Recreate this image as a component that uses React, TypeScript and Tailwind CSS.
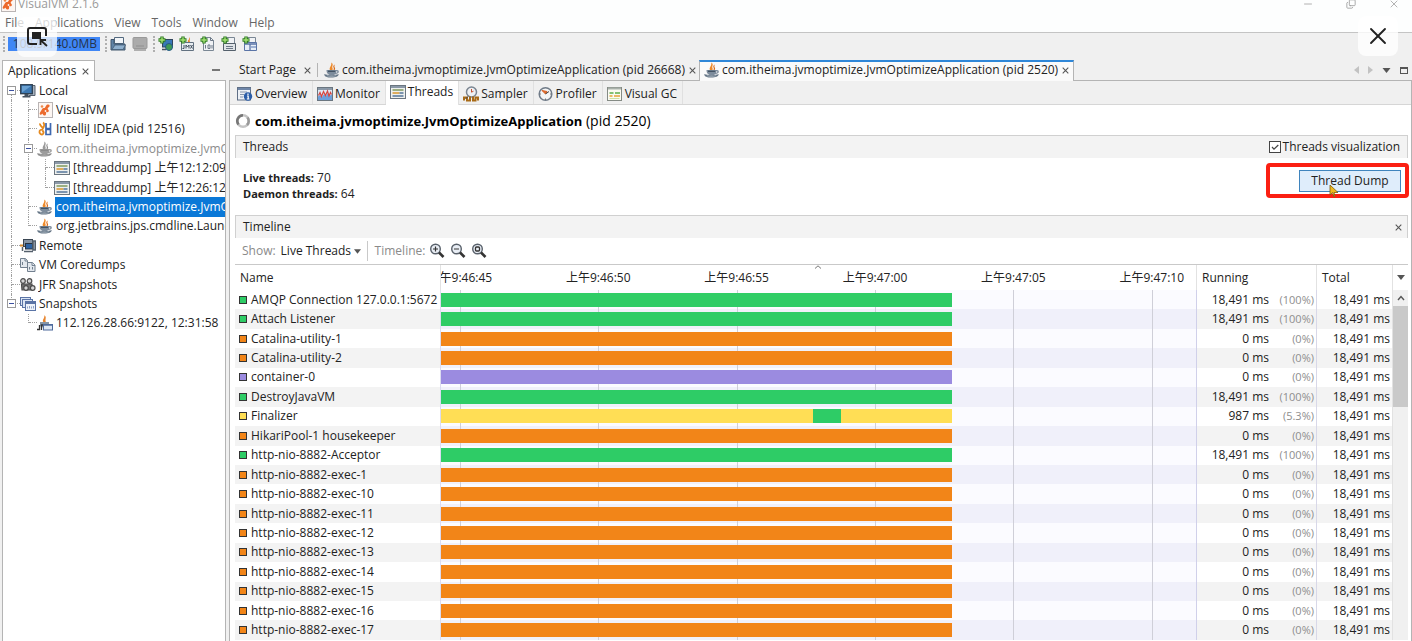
import React from 'react';
import { X, Minus, Copy } from 'lucide-react';

type IconProps = { className?: string };

/* ---------- icons ---------- */

const CloseGlyph = ({ className = 'w-[7px] h-[7px]' }: IconProps) => (
  <svg viewBox="0 0 8 8" className={className} fill="none" stroke="#555" strokeWidth="1.2">
    <path d="M.8.8 7.2 7.2M7.2.8.8 7.2" />
  </svg>
);

const JavaIcon = ({ gray = false }: { gray?: boolean }) => (
  <svg viewBox="0 0 16 16" className="w-4 h-4 shrink-0">
    <path d="M7 9C3.500 6.500 8 4.500 7.300.5c3 2 .2 3.700 1.200 5.500.6 1.200 0 2.300-1.500 3z" fill={gray ? '#9a9a9a' : '#ee8a2a'} />
    <path d="M10.800 2.500C8.500 4 9.500 5 9.800 6.300c.2 1-.4 1.900-1.300 2.700 3.200-1 2.800-2.700 2.200-3.500-.6-.9-.2-2 .1-3z" fill={gray ? '#8a8a8a' : '#d96a18'} />
    <path d="M2.500 8h9.700c3.400-.9 3.800 3.600-.6 4-1.800 1.800-6.200 1.800-7.600 0C2.800 11 2.500 9.600 2.500 8z" fill={gray ? '#9c9c9c' : '#7d8c9c'} />
    <path d="M12.300 9.200c1.500-.2 1.500 1.500-.2 1.600z" fill="#fff" />
    <path d="M4 9.300h7.200" stroke={gray ? '#888' : '#3d4d5e'} strokeWidth="1.200" />
    <path d="M.5 12c2.500 1.500 11.500 1.500 14 0 .8 2-2.500 3.600-7 3.600S-.4 14 .5 12z" fill={gray ? '#8d8d8d' : '#667686'} />
    <path d="M3 13.700c2.500.8 6.500.8 9 0" stroke={gray ? '#b0b0b0' : '#aab6c2'} strokeWidth=".8" fill="none" />
  </svg>
);

const VisualVmIcon = () => (
  <svg viewBox="0 0 16 16" className="w-4 h-4 shrink-0">
    <rect x="1.500" y=".5" width="14" height="15" fill="#fdf6f2" stroke="#b9b4b4" />
    <path d="M10.500 2.500c2-.5 3 1.500 1.500 2.500s-1.800 1.500-.5 3-1 3-2 2 .5 3-1.500 3.500-2.500-2-2.500-2-1.500 2-2.500 1 .5-2.500 1-3.500 1.500-3.500 3-3 1.500-2.700 3.500-3.500z" fill="#ec6a2c" />
    <circle cx="5" cy="4.500" r="1.300" fill="#f08a4a" />
    <circle cx="8.500" cy="9" r=".9" fill="#fdf6f2" />
  </svg>
);

const IntellijIcon = () => (
  <svg viewBox="0 0 16 16" className="w-4 h-4 shrink-0" fill="none">
    <path d="M6 1.500c3 2 .5 5-1 7.500M5 9c-2.500-1-3.500 2.500-1.500 4S8 12 5.500 9.500M3 2.500c-.5 2 2 3.500 3.500 5" stroke="#e58a1f" strokeWidth="1.800" />
    <path d="M9 2v5.500h4.500V2M9 8.500v5h4.500v-5z" stroke="#3e68b0" strokeWidth="1.700" />
  </svg>
);

const LocalIcon = () => (
  <svg viewBox="0 0 16 16" className="w-4 h-4 shrink-0">
    <path d="M12 2.500h3v10H9V14" fill="#a9b4c0" stroke="#56616e" />
    <rect x=".7" y="1.700" width="11.600" height="9" fill="#3d79b3" stroke="#2d3e50" strokeWidth="1.300" />
    <path d="M2 3h9L2 9.500z" fill="#6aa1d2" />
    <path d="M4.500 11h4v2h2v1.500h-8V13h2z" fill="#46525f" />
  </svg>
);

const RemoteIcon = () => (
  <svg viewBox="0 0 16 16" className="w-4 h-4 shrink-0">
    <path d="M0 7.500h4" stroke="#d98a2b" strokeWidth="2" />
    <rect x="3.500" y="1.500" width="9" height="7" fill="#8794a3" stroke="#3a4552" />
    <rect x="5.500" y="5.500" width="7" height="5.500" fill="#2c62a3" stroke="#27313d" />
    <path d="M13 3h2.500v9H13zM2.500 9v4M4 13.500h9" stroke="#55606c" fill="#9aa5b1" strokeWidth="1.500" />
  </svg>
);

const CoredumpIcon = () => (
  <svg viewBox="0 0 16 16" className="w-4 h-4 shrink-0" fill="#e3e8ee" stroke="#72808f">
    <path d="M.5 1.500h5l2 2v7h-7z" />
    <path d="M5 1.500v2.500h2.500M2.500 5v3" />
    <path d="M7.500 5.500h5l2.500 2.500v6.500H7.500z" />
    <path d="M12 5.500V8.500h3M9.500 12.500v-2.500M12.500 12.500v-2.500" />
  </svg>
);

const JfrIcon = () => (
  <svg viewBox="0 0 16 16" className="w-4 h-4 shrink-0" fill="#d5d5d5" stroke="#4c4c4c" strokeWidth="1.200">
    <circle cx="3" cy="4" r="2.300" />
    <circle cx="9.500" cy="4" r="2.300" />
    <path d="M1.500 7H12v6H2z" fill="#777" />
    <circle cx="6" cy="11" r="2.300" />
    <circle cx="12.700" cy="11" r="2.300" />
  </svg>
);

const SnapshotsIcon = () => (
  <svg viewBox="0 0 16 16" className="w-4 h-4 shrink-0" stroke="#5a74a6">
    <rect x=".5" y="1.500" width="10" height="8" fill="#dbe5f3" />
    <rect x="2.500" y="3.500" width="10" height="8" fill="#dbe5f3" />
    <rect x="5.500" y="5.500" width="10" height="9" fill="#eef3fa" />
    <path d="M5.500 7h10" strokeWidth="2" />
    <path d="M7.500 12.500v-2M9.500 12.500V10M11.500 12.500v-2M13.500 12.500V10" stroke="#8fa3c6" />
  </svg>
);

const SnapshotIcon = () => (
  <svg viewBox="0 0 16 16" className="w-4 h-4 shrink-0">
    <path d="M7 7.500C4 5.500 8 3.500 7.300.3c3 2 .2 3.700 1.700 7.200z" fill="#e8842c" />
    <path d="M3 7h9v4c-2 2-7 2-9 0z" fill="#8795a4" />
    <path d="M0 14.500h2.500V10M4.500 15v-5h2" fill="none" stroke="#333" strokeWidth="1.300" />
    <rect x="6.500" y="9.500" width="9" height="5.500" fill="#dfe8f4" stroke="#4f6b9c" />
    <path d="M6.500 10h9" stroke="#4f6b9c" strokeWidth="1.500" />
  </svg>
);

const ThreadsIcon = () => (
  <svg viewBox="0 0 16 16" className="w-4 h-4 shrink-0">
    <rect x=".5" y="1.500" width="15" height="13" fill="#eef0ee" stroke="#6b7680" />
    <path d="M1 3h14" stroke="#8b99a8" strokeWidth="2" />
    <path d="M2.500 6h11" stroke="#7f9a5e" strokeWidth="1.500" />
    <path d="M2.500 9h7" stroke="#d9962c" strokeWidth="1.500" />
    <path d="M9.500 9h4M2.500 12h11" stroke="#55759b" strokeWidth="1.500" />
  </svg>
);

const OverviewIcon = () => (
  <svg viewBox="0 0 16 16" className="w-4 h-4 shrink-0">
    <rect x=".5" y="1.500" width="13" height="12.500" fill="#edf1f6" stroke="#5f6f86" />
    <path d="M1 3h12.500" stroke="#6f86a8" strokeWidth="2" />
    <path d="M3 6h7M3 8.500h4M3 11h3" stroke="#8494ab" />
    <circle cx="11" cy="10.500" r="4.200" fill="#2c5ea8" />
    <path d="M11 7.600v1.500M10 10h1.200v3M9.800 13h2.600" stroke="#fff" strokeWidth="1.200" fill="none" />
  </svg>
);

const MonitorIcon = () => (
  <svg viewBox="0 0 16 16" className="w-4 h-4 shrink-0" fill="none">
    <rect x=".5" y="1.500" width="15" height="13" fill="#dfe9f5" stroke="#6b7680" />
    <path d="M1 3h14" stroke="#8b99a8" strokeWidth="2" />
    <path d="M1 14V10.500l2-1.500 2 2 2-3 2 2 2-3 2 2.500 2-1V14z" fill="#6d9fdb" />
    <path d="m1.500 9.500 1.500-3 1.500 4 2-5 2 4 2-4.500 1.500 5 1.500-3.500 1 2" stroke="#d6453f" strokeWidth="1.200" />
  </svg>
);

const SamplerIcon = () => (
  <svg viewBox="0 0 16 16" className="w-4 h-4 shrink-0" fill="none">
    <circle cx="8.500" cy="6" r="5" fill="#eef1f4" stroke="#7b8591" strokeWidth="1.500" />
    <path d="M8.500 3v3.200l2-1" stroke="#c9512f" />
    <path d="M1 14.500v-3h3v3h3v-4M10 10.500v4h2.500v-3H15v3" stroke="#a86a16" strokeWidth="2" />
    <path d="M5 10.500 2.500 13" stroke="#444" />
  </svg>
);

const ProfilerIcon = () => (
  <svg viewBox="0 0 16 16" className="w-4 h-4 shrink-0" fill="none">
    <circle cx="7.500" cy="8" r="6.300" fill="#f4f5f6" stroke="#707b88" strokeWidth="1.500" />
    <path d="M7.500 8 4 4.500l5 1z" fill="#e0702c" stroke="#d9632a" />
    <path d="M7.500 8 11 5.500" stroke="#444" />
    <path d="M7.500 12.500V14M3 8H2M13 8h-1" stroke="#777" />
  </svg>
);

const VisualGcIcon = () => (
  <svg viewBox="0 0 16 16" className="w-4 h-4 shrink-0">
    <rect x=".5" y="1.500" width="14" height="13" fill="#fbfbf3" stroke="#858b85" />
    <path d="M1 2.500h13" stroke="#a8b0aa" strokeWidth="2" />
    <path d="M2.500 7h4M8 7h5" stroke="#5fae4a" strokeWidth="1.500" />
    <path d="M2.500 10h3M7 10h6" stroke="#e8a33a" strokeWidth="1.300" />
    <path d="M2.500 12.500h10" stroke="#cfe0a0" />
  </svg>
);

const FolderIcon = () => (
  <svg viewBox="0 0 16 16" className="w-4 h-4">
    <path d="M4.500 1.500h9v6h-9z" fill="#f2f5f8" stroke="#53697f" />
    <path d="M1 14V3.500h3V8h11v6z" fill="#5f83a6" stroke="#40566d" />
    <path d="M2 13.500 5 9h10.500L13 13.500z" fill="#8fb0ce" stroke="#40566d" strokeWidth=".7" />
  </svg>
);

const DiskIcon = () => (
  <svg viewBox="0 0 16 16" className="w-4 h-4">
    <rect x="1" y="1.500" width="14" height="11" rx="1" fill="#ababab" stroke="#999" />
    <path d="M2 14h12M4 10h8" stroke="#999" strokeWidth="1.500" />
  </svg>
);

// Toolbar "add" icon: green plus in the corner, the page below varies.
const AddIcon = ({ kind }: { kind: string }) => (
  <svg viewBox="0 0 16 16" className="w-4 h-4" fill="none">
    {kind === 'host' && (
      <>
        <rect x="4.500" y="3.500" width="10" height="7.500" fill="#3978b8" stroke="#31465c" />
        <circle cx="11" cy="11" r="3.500" fill="#3f9a55" stroke="#245a8a" />
        <path d="M4 13.500h4" stroke="#46525f" strokeWidth="1.500" />
      </>
    )}
    {kind === 'jmx' && (
      <>
        <path d="M9 6c-1-2 2-2 1-5 2 2 0 3 1 5z" fill="#e8842c" />
        <path d="M2.500 5v9.500h12v-8H6" fill="#e8edf2" stroke="#627180" />
        <path d="M5 9v3.500H3.500M7 12.500V9l1.500 2L10 9v3.500M11.500 9l2 3.500M13.500 9l-2 3.500" stroke="#44505e" />
      </>
    )}
    {kind === 'core' && (
      <>
        <path d="M3.500 1.500h7l3 3v10h-10z" fill="#f0f2f5" stroke="#7a8794" />
        <path d="M10.500 1.500v3h3M5.500 9v3.500M8 9h2v3.500H8zM12 9v3.500" stroke="#6b7786" />
      </>
    )}
    {kind === 'jfr' && (
      <>
        <path d="M5.500 1.500h8v6h-8z" fill="#f0f2f5" stroke="#7a8794" />
        <path d="M2.500 7.500h12v7h-12z" fill="#e0e4e8" stroke="#54606c" />
        <path d="M5 10.500h7M5 12.500h7" stroke="#6b7786" />
      </>
    )}
    {kind === 'snapshot' && (
      <>
        <path d="M5.500 1.500h8v6h-8z" fill="#f0f2f5" stroke="#7a8794" />
        <path d="M2.500 6.500h12v8h-12z" fill="#e7eef8" stroke="#5a74a6" />
        <path d="M3 8h11M8 8v6" stroke="#5a74a6" strokeWidth="1.300" />
        <path d="M9 11h5" stroke="#9db1d3" strokeWidth="2" />
      </>
    )}
    <path d="M4 .5v7M.5 4h7" stroke="#2c7a20" strokeWidth="3.400" />
    <path d="M4 1.300v5.400M1.300 4h5.400" stroke="#a5e274" strokeWidth="1.400" />
  </svg>
);

const ZoomIcon = ({ kind }: { kind: string }) => (
  <svg viewBox="0 0 16 16" className="w-4 h-4" fill="none">
    <circle cx="6.500" cy="6" r="4.800" fill="#e9eef5" stroke="#59616b" strokeWidth="1.400" />
    <path d="m10 9.500 4.500 4.500" stroke="#333" strokeWidth="2.600" />
    {kind === 'in' && <path d="M4 6h5M6.500 3.500v5" stroke="#333" strokeWidth="1.200" />}
    {kind === 'out' && <path d="M4 6h5" stroke="#555" strokeWidth="1.200" />}
    {kind === 'fit' && <rect x="4.500" y="4" width="4" height="4" rx="1" stroke="#333" strokeWidth="1.300" />}
  </svg>
);

const Caret = ({ className = 'w-2 h-[5px]' }: IconProps) => (
  <svg viewBox="0 0 8 5" className={className}>
    <path d="M0 0h8L4 5z" fill="#555" />
  </svg>
);

/* ---------- data ---------- */

type TreeNode = {
  label: string;
  icon: React.ReactNode;
  // one entry per indent column: line = passes by, tee = branch, end = last branch, minus = expander
  guides: string[];
  muted?: boolean;
  selected?: boolean;
};

const tree: TreeNode[] = [
  { label: 'Local', icon: <LocalIcon />, guides: ['minus-first'] },
  { label: 'VisualVM', icon: <VisualVmIcon />, guides: ['line', 'tee'] },
  { label: 'IntelliJ IDEA (pid 12516)', icon: <IntellijIcon />, guides: ['line', 'tee'] },
  { label: 'com.itheima.jvmoptimize.JvmOptimizeApplication (pid 26668)', icon: <JavaIcon gray />, guides: ['line', 'minus'], muted: true },
  { label: '[threaddump] 上午12:12:09', icon: <ThreadsIcon />, guides: ['line', 'line', 'tee'] },
  { label: '[threaddump] 上午12:26:12', icon: <ThreadsIcon />, guides: ['line', 'line', 'end'] },
  { label: 'com.itheima.jvmoptimize.JvmOptimizeApplication (pid 2520)', icon: <JavaIcon />, guides: ['line', 'tee'], selected: true },
  { label: 'org.jetbrains.jps.cmdline.Launcher', icon: <JavaIcon />, guides: ['line', 'end'] },
  { label: 'Remote', icon: <RemoteIcon />, guides: ['tee'] },
  { label: 'VM Coredumps', icon: <CoredumpIcon />, guides: ['tee'] },
  { label: 'JFR Snapshots', icon: <JfrIcon />, guides: ['tee'] },
  { label: 'Snapshots', icon: <SnapshotsIcon />, guides: ['minus-last'] },
  { label: '112.126.28.66:9122, 12:31:58', icon: <SnapshotIcon />, guides: ['none', 'end'] },
];

const GREEN = 'bg-[#2ecc66]';
const ORANGE = 'bg-[#f28518]';
const PURPLE = 'bg-[#9b8be0]';
const YELLOW = 'bg-[#ffde55]';

const threads = [
  { name: 'AMQP Connection 127.0.0.1:5672', color: GREEN, running: '18,491 ms', pct: '(100%)' },
  { name: 'Attach Listener', color: GREEN, running: '18,491 ms', pct: '(100%)' },
  { name: 'Catalina-utility-1', color: ORANGE, running: '0 ms', pct: '(0%)' },
  { name: 'Catalina-utility-2', color: ORANGE, running: '0 ms', pct: '(0%)' },
  { name: 'container-0', color: PURPLE, running: '0 ms', pct: '(0%)' },
  { name: 'DestroyJavaVM', color: GREEN, running: '18,491 ms', pct: '(100%)' },
  { name: 'Finalizer', color: YELLOW, running: '987 ms', pct: '(5.3%)', burst: { from: 13.47, to: 14.48 } },
  { name: 'HikariPool-1 housekeeper', color: ORANGE, running: '0 ms', pct: '(0%)' },
  { name: 'http-nio-8882-Acceptor', color: GREEN, running: '18,491 ms', pct: '(100%)' },
  ...['1', '10', '11', '12', '13', '14', '15', '16', '17'].map((n) => ({
    name: `http-nio-8882-exec-${n}`,
    color: ORANGE,
    running: '0 ms',
    pct: '(0%)',
  })),
];

// seconds shown by the timeline column
const SPAN = 27.3;
const RECORDED = 18.491;
const ticks = [
  { at: 0.7, label: '上午9:46:45' },
  { at: 5.7, label: '上午9:46:50' },
  { at: 10.7, label: '上午9:46:55' },
  { at: 15.7, label: '上午9:47:00' },
  { at: 20.7, label: '上午9:47:05' },
  { at: 25.7, label: '上午9:47:10' },
];
const pos = (sec: number) => `${(sec / SPAN) * 100}%`;

const views = [
  { label: 'Overview', icon: <OverviewIcon /> },
  { label: 'Monitor', icon: <MonitorIcon /> },
  { label: 'Threads', icon: <ThreadsIcon />, active: true },
  { label: 'Sampler', icon: <SamplerIcon /> },
  { label: 'Profiler', icon: <ProfilerIcon /> },
  { label: 'Visual GC', icon: <VisualGcIcon /> },
];

/* ---------- parts ---------- */

function Guide({ kind }: { kind: string }) {
  const minus = kind.startsWith('minus');
  const up = kind !== 'none' && kind !== 'minus-first';
  const down = kind !== 'none' && kind !== 'end' && kind !== 'minus-last';
  const branch = kind === 'tee' || kind === 'end' || minus;
  return (
    <span className="relative w-[17px] self-stretch shrink-0 grid grid-cols-2 grid-rows-2">
      <span className={up ? 'border-r border-dotted border-[#a0a0a0]' : ''} />
      <span className={branch ? 'border-b border-dotted border-[#a0a0a0]' : ''} />
      <span className={down ? 'border-r border-dotted border-[#a0a0a0]' : ''} />
      <span />
      {minus && (
        <button aria-label="Collapse" className="absolute inset-0 m-auto w-[9px] h-[9px] bg-white border border-[#9a9a9a] flex items-center justify-center">
          <span className="w-[5px] h-px bg-[#3b50a0]" />
        </button>
      )}
    </span>
  );
}

function TitleAndMenu() {
  return (
    <header className="bg-[#fdfefe] border-b border-[#c4c4c4] text-[#666]">
      <div className="h-[14px] flex items-end justify-between pr-3 overflow-hidden">
        <div className="flex items-center gap-[2px] h-5 text-[#9a9a9a]">
          <VisualVmIcon />
          <span className="leading-5">VisualVM 2.1.6</span>
        </div>
        <div className="flex items-center gap-8 h-5 text-[#9a9a9a]">
          <button aria-label="Minimize"><Minus className="w-3 h-3" strokeWidth={1.5} /></button>
          <button aria-label="Restore"><Copy className="w-[10px] h-[10px] -scale-x-100 rotate-180" strokeWidth={2} /></button>
          <button aria-label="Close"><X className="w-3 h-3" strokeWidth={1.5} /></button>
        </div>
      </div>
      <nav className="h-[18px] flex items-center gap-[11px] pl-[5px]">
        {['File', 'Applications', 'View', 'Tools', 'Window', 'Help'].map((m) => (
          <button key={m}>{m}</button>
        ))}
      </nav>
    </header>
  );
}

const Grip = () => <span className="w-[2px] h-4 border-l-2 border-dotted border-[#b0b0b0]" />;

function Toolbar() {
  return (
    <div className="h-[24px] flex items-center gap-[3px] pl-[3px] pb-[2px]">
      <Grip />
      <div className="w-[92px] h-[14px] bg-[#3f86f5] text-[#26334a] flex items-center justify-end pr-[3px] leading-[14px] whitespace-nowrap">
        108.9/140.0MB
      </div>
      <div className="flex items-center gap-[3px] ml-[2px]">
        <Grip />
        <div className="flex gap-[6px]">
          <button aria-label="Open file"><FolderIcon /></button>
          <button aria-label="Save as" disabled><DiskIcon /></button>
        </div>
      </div>
      <div className="flex items-center gap-[3px] ml-[2px]">
        <Grip />
        <div className="flex gap-[5px]">
          {['host', 'jmx', 'core', 'jfr', 'snapshot'].map((k) => (
            <button key={k} aria-label={`Add ${k}`}><AddIcon kind={k} /></button>
          ))}
        </div>
      </div>
    </div>
  );
}

function ApplicationsPanel() {
  return (
    <aside className="w-[224px] ml-[2px] shrink-0 flex flex-col">
      <div className="h-[24px] pt-[3px] flex shrink-0">
        <div className="flex items-center gap-[6px] pl-[5px] pr-[5px] bg-white border border-b-0 border-[#b4b4b4]">
          <span>Applications</span>
          <button aria-label="Close Applications"><CloseGlyph /></button>
        </div>
        <div className="flex-1 border-b border-[#b4b4b4] flex items-center justify-end pr-[6px]">
          <button aria-label="Minimize panel" className="w-2 h-[2px] bg-[#777]" />
        </div>
      </div>
      <div className="flex-1 bg-white border-x border-[#b4b4b4] overflow-hidden">
        <ul className="h-[252px] flex flex-col">
          {tree.map((n) => (
            <li key={n.label} className="flex-1 min-h-0 flex items-center">
              {n.guides.map((g, i) => (
                <Guide key={i} kind={g} />
              ))}
              {n.icon}
              <span
                className={`ml-[2px] pl-px self-stretch flex items-center whitespace-nowrap overflow-hidden flex-1 ${
                  n.selected ? 'bg-[#0a78d7] text-white' : n.muted ? 'text-[#8c8c8c]' : ''
                }`}
              >
                {n.label}
              </span>
            </li>
          ))}
        </ul>
      </div>
    </aside>
  );
}

function EditorTabs() {
  return (
    <div className="h-[24px] pt-[3px] flex items-stretch shrink-0">
      <div className="flex items-center gap-2 pl-[10px] pr-[6px] border-b border-[#b4b4b4]">
        <button>Start Page</button>
        <button aria-label="Close Start Page"><CloseGlyph /></button>
      </div>
      <div className="flex items-center pr-[3px] border-b border-[#b4b4b4]">
        <span className="w-px h-[14px] bg-[#b4b4b4] mr-[6px]" />
        <button className="flex items-center gap-[2px] whitespace-nowrap">
          <JavaIcon />
          com.itheima.jvmoptimize.JvmOptimizeApplication (pid 26668)
        </button>
        <button aria-label="Close tab" className="ml-1"><CloseGlyph /></button>
      </div>
      <div className="flex items-center pl-1 pr-1 pb-[3px] bg-[#fafafa] border-x border-t-2 border-x-[#b4b4b4] border-t-[#2f87d8]">
        <button className="flex items-center gap-[2px] whitespace-nowrap">
          <JavaIcon />
          com.itheima.jvmoptimize.JvmOptimizeApplication (pid 2520)
        </button>
        <button aria-label="Close tab" className="ml-1"><CloseGlyph /></button>
      </div>
      <div className="flex-1 flex items-center justify-end gap-[9px] pr-1 border-b border-[#b4b4b4]">
        <button aria-label="Scroll tabs left"><svg viewBox="0 0 5 8" className="w-[5px] h-2"><path d="M5 0v8L0 4z" fill="#c2c2c2" /></svg></button>
        <button aria-label="Scroll tabs right"><svg viewBox="0 0 5 8" className="w-[5px] h-2"><path d="M0 0v8l5-4z" fill="#c2c2c2" /></svg></button>
        <button aria-label="Tab list"><Caret className="w-[9px] h-[5px]" /></button>
        <button aria-label="Maximize" className="w-2 h-[7px] border border-t-2 border-[#555]" />
      </div>
    </div>
  );
}

function ViewTabs() {
  return (
    <div className="h-[24px] shrink-0 flex items-stretch pl-[3px] border-b border-[#d6d6d6]">
      {views.map((v) => (
        <button
          key={v.label}
          className={`flex items-center gap-[2px] whitespace-nowrap border-r border-[#e0e0e0] ${
            v.active ? 'bg-white -mb-px pl-1 pr-[5px] pb-[3px]' : 'pl-1 pr-[5px] pt-[3px]'
          }`}
        >
          {v.icon}
          {v.label}
        </button>
      ))}
    </div>
  );
}

function ThreadTable() {
  return (
    <div className="flex-1 min-h-0 flex border-t border-[#c9c9c9]">
      <table className="flex-1 w-full h-full table-fixed border-collapse">
        <colgroup>
          <col className="w-[205px]" />
          <col />
          <col className="w-[120px]" />
          <col className="w-[76px]" />
        </colgroup>
        <thead>
          <tr className="h-[25px] text-left">
            <th className="p-0 pl-[5px] font-normal border-r border-[#e2e2e2]">Name</th>
            <th className="p-0 font-normal border-r border-[#e2e2e2]">
              <div className="relative h-[25px] overflow-hidden">
                <svg viewBox="0 0 8 4" className="absolute left-1/2 top-0 w-2 h-1 -translate-x-1/2" fill="none" stroke="#777">
                  <path d="M1 3.500 4 .8l3 2.700" />
                </svg>
                {ticks.map((t) => (
                  <span key={t.label} className="absolute top-0 leading-[26px] -translate-x-1/2 whitespace-nowrap" style={{ left: pos(t.at) }}>
                    {t.label}
                  </span>
                ))}
              </div>
            </th>
            <th className="p-0 pl-[5px] font-normal border-r border-[#e2e2e2]">Running</th>
            <th className="p-0 pl-[5px] font-normal border-r border-[#e2e2e2]">Total</th>
          </tr>
        </thead>
        <tbody>
          {threads.map((t) => (
            <tr key={t.name} className="group even:bg-[#f3f3f3]">
              <td className="p-0 border-r border-[#dcdcf0]">
                <div className="flex items-center gap-1 pl-1 leading-[18px] whitespace-nowrap">
                  <span className={`w-2 h-2 border border-[#333] ${t.color}`} />
                  {t.name}
                </div>
              </td>
              <td className="p-0 relative bg-[#fbfbff] group-even:bg-[#f0f0fa] border-r border-[#d0d0ea]">
                {ticks.map((k) => (
                  <span key={k.label} className="absolute inset-y-0 w-px bg-[#cfcfd8]" style={{ left: pos(k.at) }} />
                ))}
                <div className={`relative h-[14px] ${t.color}`} style={{ width: pos(RECORDED) }}>
                  {'burst' in t && t.burst && (
                    <span
                      className="absolute inset-y-0 bg-[#2ecc66]"
                      style={{
                        left: `${(t.burst.from / RECORDED) * 100}%`,
                        width: `${((t.burst.to - t.burst.from) / RECORDED) * 100}%`,
                      }}
                    />
                  )}
                </div>
              </td>
              <td className="p-0 border-r border-[#d8d8e8]">
                <div className="flex items-center justify-end pr-[2px] leading-[18px]">
                  <span>{t.running}</span>
                  <span className="w-[45px] text-right text-[11px] text-[#8e8e8e]">{t.pct}</span>
                </div>
              </td>
              <td className="p-0 pr-[2px] text-right leading-[18px] border-r border-[#e2e2e2]">18,491 ms</td>
            </tr>
          ))}
        </tbody>
      </table>
      <div className="w-[15px] shrink-0 flex flex-col bg-[#f0f0f0]">
        <button aria-label="Columns" className="h-[25px] bg-white flex items-center justify-center"><Caret /></button>
        <button aria-label="Scroll up" className="h-4 flex items-center justify-center">
          <svg viewBox="0 0 8 6" className="w-2 h-[6px]" fill="none" stroke="#555" strokeWidth="1.400"><path d="M1 5l3-3.500L7 5" /></svg>
        </button>
        <div className="h-[101px] bg-[#c9c9c9]" />
      </div>
    </div>
  );
}

function ThreadsView() {
  return (
    <main className="flex-1 min-h-0 flex flex-col bg-white pl-[5px] pr-[3px] pb-px">
      <h1 className="h-[30px] flex items-center gap-1 text-[14px] text-black shrink-0 pt-[2px]">
        <svg viewBox="0 0 16 16" className="w-4 h-4" fill="none" strokeWidth="2.600">
          <circle cx="8" cy="8" r="5.800" stroke="#c4c4c4" />
          <path d="M8 2.200A5.800 5.800 0 0 0 3.500 11.500" stroke="#777" />
          <path d="M12.500 4.500A5.800 5.800 0 0 1 12 12" stroke="#999" />
        </svg>
        <span><b className="text-[13px]">com.itheima.jvmoptimize.JvmOptimizeApplication</b> (pid 2520)</span>
      </h1>

      <div className="h-[23px] shrink-0 flex items-center justify-between px-[7px] bg-[#f3f3f3] border border-b-0 border-[#d0d0d0]">
        <h2>Threads</h2>
        <label className="flex items-center gap-[2px]">
          <span className="relative flex">
            <input type="checkbox" defaultChecked className="peer appearance-none w-3 h-3 bg-white border border-[#444]" />
            <svg viewBox="0 0 12 12" className="absolute inset-0 w-3 h-3 hidden peer-checked:block pointer-events-none" fill="none" stroke="#444" strokeWidth="1.200">
              <path d="m3 6 2 2.200L9.300 4" />
            </svg>
          </span>
          Threads visualization
        </label>
      </div>

      <div className="h-[57px] shrink-0 flex items-start justify-between pl-2 pr-[7px] pt-3 relative">
        <p className="leading-4">
          <b className="text-[11px]">Live threads:</b> 70<br />
          <b className="text-[11px]">Daemon threads:</b> 64
        </p>
        <button className="w-[102px] h-[22px] bg-[#dfedfb] border border-[#3f84bd]">Thread Dump</button>
        <div className="absolute -right-px top-[5px] w-[143px] h-[35px] border-4 border-[#fb1f12] rounded-[4px] pointer-events-none" />
        <svg viewBox="0 0 10 14" className="absolute right-[69px] top-[26px] w-[10px] h-[14px]">
          <path d="M1 1v10l2.500-2.500L5 13l1-.5-1-4h4z" fill="#f0b91c" stroke="#7a5a10" strokeWidth=".8" />
        </svg>
      </div>

      <div className="h-[23px] shrink-0 flex items-center justify-between pl-[7px] pr-[5px] bg-[#f3f3f3] border border-b-0 border-[#d0d0d0]">
        <h2>Timeline</h2>
        <button aria-label="Close timeline"><CloseGlyph /></button>
      </div>

      <div className="h-[26px] shrink-0 flex items-center pl-[7px] text-[#8a8a8a]">
        <label htmlFor="show">Show:</label>
        <span className="relative flex items-center ml-[5px]">
          <select id="show" className="appearance-none bg-transparent text-[#222] pr-[9px] outline-none">
            <option>Live Threads</option>
          </select>
          <Caret className="absolute right-0 w-[7px] h-[5px] pointer-events-none" />
        </span>
        <span className="w-px h-5 bg-[#c9c9c9] ml-[6px] mr-[7px]" />
        <span>Timeline:</span>
        <div className="flex items-center gap-[5px] ml-1">
          <button aria-label="Zoom in"><ZoomIcon kind="in" /></button>
          <button aria-label="Zoom out"><ZoomIcon kind="out" /></button>
          <button aria-label="Scale to fit"><ZoomIcon kind="fit" /></button>
        </div>
      </div>

      <ThreadTable />
    </main>
  );
}

export default function App() {
  return (
    <div className="relative h-screen flex flex-col overflow-hidden bg-[#f0f0f0] text-[#222] text-[12px] leading-4 font-['Open_Sans','Noto_Sans_CJK_SC',sans-serif]">
      <TitleAndMenu />
      <Toolbar />
      <div className="flex-1 min-h-0 flex gap-[3px]">
        <ApplicationsPanel />
        <section className="flex-1 min-w-0 flex flex-col">
          <EditorTabs />
          <div className="flex-1 min-h-0 flex flex-col border-x border-[#b4b4b4]">
            <ViewTabs />
            <ThreadsView />
          </div>
        </section>
      </div>

      {/* Viewer controls floating over the window */}
      <button aria-label="Pick region" className="absolute left-[17px] top-[17px] w-10 h-10 rounded-lg bg-white/75 flex items-center justify-center">
        <svg viewBox="0 0 24 24" className="w-6 h-6" fill="none" stroke="#222" strokeWidth="2">
          <path d="M12 19H5a2 2 0 0 1-2-2V5a2 2 0 0 1 2-2h14a2 2 0 0 1 2 2v6" />
          <rect x="7" y="7" width="9" height="7" fill="#222" stroke="none" />
          <path d="m22 21-6-5.500M15.500 20v-5H21" strokeWidth="1.800" />
        </svg>
      </button>
      <button aria-label="Close viewer" className="absolute right-[14px] top-[16px] w-10 h-10 rounded-lg bg-white/80 flex items-center justify-center">
        <X className="w-7 h-7 text-[#222]" strokeWidth={1.600} />
      </button>
    </div>
  );
}
